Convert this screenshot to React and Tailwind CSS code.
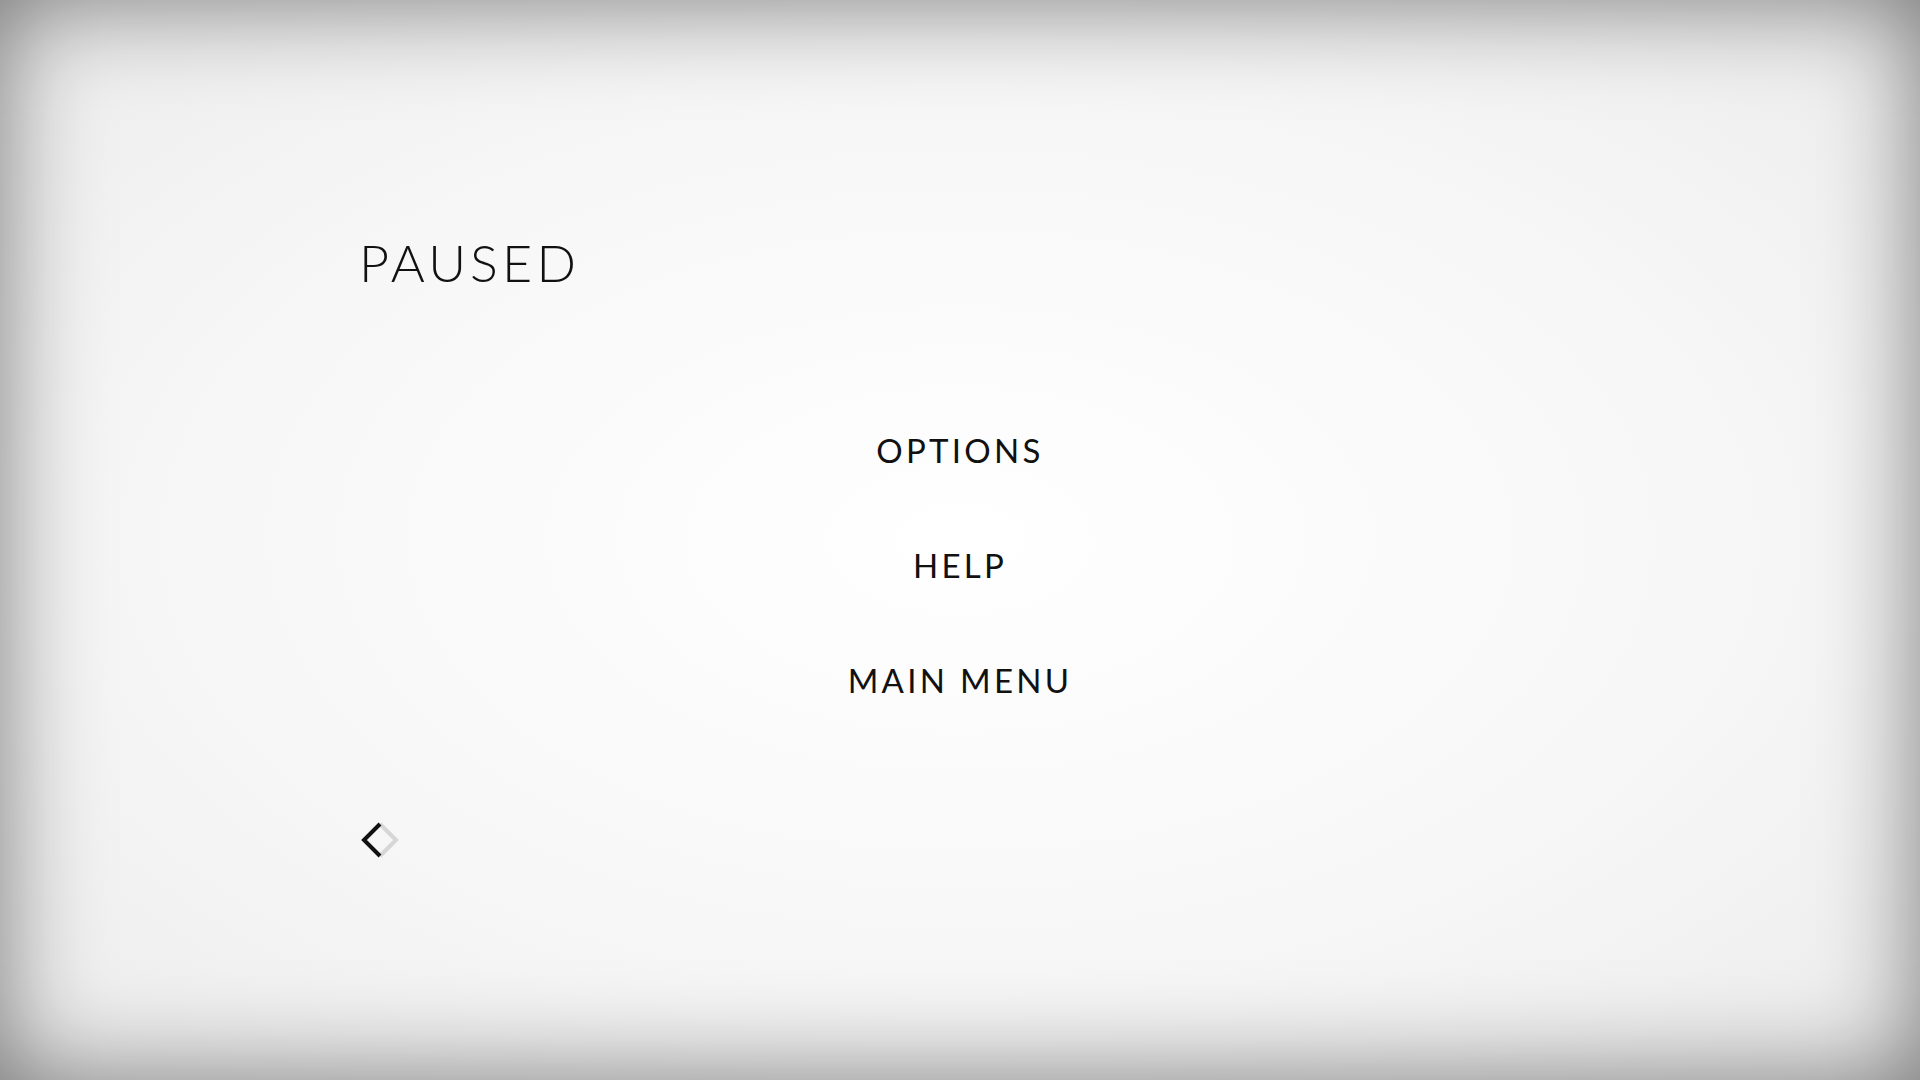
import React from 'react';

function BackIcon() {
    return (
        <svg width="40" height="40" viewBox="0 0 40 40" className="block">
            <path d="M20 3 L36 19 L20 35" fill="none" stroke="#d6d6d6" strokeWidth="4" />
            <path d="M20 3 L4 19 L20 35" fill="none" stroke="#111" strokeWidth="4" />
        </svg>
    );
}

export default function App() {
    const items = ['OPTIONS', 'HELP', 'MAIN MENU'];

    return (
        <div className="w-[1920px] h-[1080px] overflow-hidden bg-[radial-gradient(ellipse_at_center,#ffffff_0%,#f7f7f7_55%,#ececec_100%)] shadow-[inset_0_0_100px_rgba(0,0,0,0.5)] font-['Lato',sans-serif] text-[#111]">
            <div className="flex flex-col h-full px-[362px] pt-[236px]">
                <h1 className="text-[52px] font-light leading-none tracking-[0.08em] -ml-[3px]">PAUSED</h1>

                <div className="flex flex-col items-center gap-[82px] mt-[146px]">
                    {items.map(item => (
                        <div key={item} className="text-[33px] leading-none tracking-[0.1em]">{item}</div>
                    ))}
                </div>

                <div className="mt-[124px] -ml-[2px]">
                    <BackIcon />
                </div>
            </div>
        </div>
    );
}
